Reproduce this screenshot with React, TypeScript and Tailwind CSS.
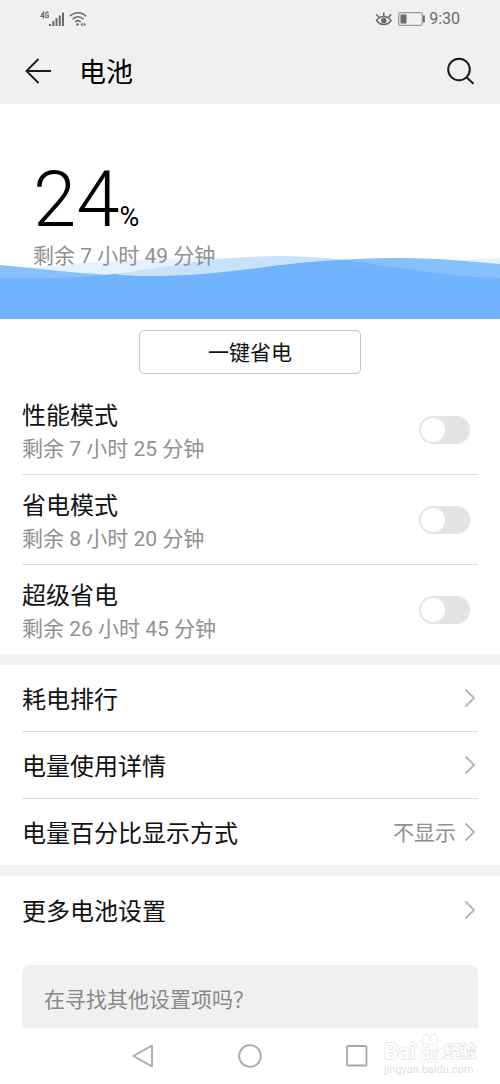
import { useState } from 'react';

interface PowerMode {
    id: string;
    title: string;
    remaining: string;
}

interface SettingLink {
    title: string;
    value?: string;
}

const modes: PowerMode[] = [
    { id: 'performance', title: '性能模式', remaining: '剩余 7 小时 25 分钟' },
    { id: 'saver', title: '省电模式', remaining: '剩余 8 小时 20 分钟' },
    { id: 'ultra', title: '超级省电', remaining: '剩余 26 小时 45 分钟' },
];

const usageLinks: SettingLink[] = [
    { title: '耗电排行' },
    { title: '电量使用详情' },
    { title: '电量百分比显示方式', value: '不显示' },
];

function StatusBar() {
    return (
        <div className="flex h-[38px] items-center justify-between px-10 text-[#6b6b6b]">
            <div className="flex items-center gap-1">
                <div className="flex items-start">
                    <svg width="9" height="16" viewBox="0 0 9 16" fill="none" stroke="currentColor" strokeWidth="1.200">
                        <path d="M3.500 7.500V1L1 5.500h3.500M8.400 2.200C8 .8 5.800 .8 5.800 2.600v2.800c0 1.800 2.600 1.800 2.600 0V4.200H7" />
                    </svg>
                    <svg width="16" height="16" viewBox="0 0 16 16" fill="currentColor">
                        <rect x="0" y="13" width="2" height="2" />
                        <rect x="3.300" y="10" width="2" height="5" />
                        <rect x="6.500" y="7" width="2" height="8" />
                        <rect x="9.800" y="4.500" width="2" height="10.500" />
                        <rect x="13" y="1.500" width="2" height="13.500" />
                    </svg>
                </div>
                <svg width="18" height="16" viewBox="0 0 18 16" fill="none" stroke="currentColor" strokeWidth="1.6">
                    <path d="M1 5.2C5.5 .6 12.500 .6 17 5.200" />
                    <path d="M3.600 8.200C6.800 5 11.200 5 14.400 8.200" />
                    <path d="M6.200 11C8 9.300 10 9.300 11.800 11" />
                    <circle cx="8.600" cy="13.500" r="1.300" fill="currentColor" stroke="none" />
                    <path d="M13.600 11.500 11.500 13.500l2.100 2zM14.800 11.500l2.100 2-2.100 2z" fill="currentColor" stroke="none" />
                </svg>
            </div>
            <div className="flex items-center gap-1">
                <svg width="18" height="16" viewBox="0 0 18 16" fill="none" stroke="currentColor" strokeWidth="1.5">
                    <path d="M1.500 9.500C5 4.300 12.500 4.300 16 9.500 12.500 14.700 5 14.700 1.500 9.500z" />
                    <circle cx="8.750" cy="9.500" r="2.700" fill="currentColor" stroke="none" />
                    <path d="M8.750 5V1.500M3.800 6.300 1.300 3.300M13.700 6.300l2.500-3" />
                </svg>
                <svg width="28" height="14" viewBox="0 0 28 14">
                    <rect x="1.700" y=".7" width="23.600" height="12.600" rx="1.500" fill="none" stroke="#9b9b9b" strokeWidth="1.300" />
                    <rect x="3.500" y="2.500" width="6" height="9" fill="currentColor" />
                    <rect x="26" y="3.500" width="1.800" height="7" fill="currentColor" />
                </svg>
                <span className="text-[16px]">9:30</span>
            </div>
        </div>
    );
}

function Waves() {
    return (
        <svg
            className="absolute inset-x-0 bottom-0 h-16 w-full"
            viewBox="0 0 500 64"
            preserveAspectRatio="none"
            aria-hidden="true"
        >
            <path d="M0 16C70 8 150 3 210 3 300 4 350 16 410 12 450 7 475 3 500 3V64H0z" fill="#e4f1fe" />
            <path d="M0 23C60 24 95 21 130 17 190 8 225 1 285 1 370 2 420 22 500 23V64H0z" fill="#c8e2fc" />
            <path d="M0 10C55 15 95 21 150 21 235 21 290 3 400 3 440 3 475 7 500 9V64H0z" fill="#86c0fd" />
            <path d="M0 23C45 24 80 23 115 19 127 21 140 21 150 21 235 21 275 7 345 5 400 12 445 22 500 23V64H0z" fill="#70b4ff" />
        </svg>
    );
}

function Chevron() {
    return (
        <svg width="12" height="20" viewBox="0 0 12 20" fill="none" stroke="#b4b4b4" strokeWidth="1.8">
            <path d="M1.500 1.500 10 10l-8.500 8.500" />
        </svg>
    );
}

function ModeRow({ mode }: { mode: PowerMode }) {
    const [enabled, setEnabled] = useState(false);

    return (
        <div className="flex h-[90px] items-center justify-between border-b border-[#dedede] pr-2 last:h-[89px] last:border-b-0">
            <label htmlFor={mode.id} className="pt-1">
                <span className="block text-[24px] leading-[34px] text-[#111]">{mode.title}</span>
                <span className="block text-[21px] leading-8 text-[#909090]">{mode.remaining}</span>
            </label>
            <input
                id={mode.id}
                type="checkbox"
                role="switch"
                checked={enabled}
                onChange={() => setEnabled(!enabled)}
                className="h-7 w-[51px] shrink-0 appearance-none rounded-full bg-[#e4e4e4] p-[2px] before:block before:size-6 before:rounded-full before:bg-white checked:bg-[#007dff] checked:before:ml-auto"
            />
        </div>
    );
}

function LinkRow({ link }: { link: SettingLink }) {
    return (
        <li className="border-b border-[#dedede] last:border-b-0">
            <a href="#" className="flex h-[66px] items-center justify-between pr-[2px] text-[24px] text-[#111]">
                <span className="pt-1">{link.title}</span>
                <span className="flex items-center gap-2 text-[21px] text-[#909090]">
                    <span className="pt-1">{link.value}</span>
                    <Chevron />
                </span>
            </a>
        </li>
    );
}

function Watermark() {
    return (
        <div className="absolute right-6 bottom-2 w-[92px] text-white" aria-hidden="true">
            <div className="flex items-end justify-between text-[22px] leading-6 font-bold [paint-order:stroke] [-webkit-text-stroke:1px_#d8d8d8]">
                <span>Bai</span>
                <span className="relative flex h-6 w-7 items-center justify-center text-[14px]">
                    <svg className="absolute bottom-0 left-0" width="28" height="32" viewBox="0 0 28 32" fill="white" stroke="#dcdcdc">
                        <ellipse cx="4" cy="13" rx="3" ry="4" />
                        <ellipse cx="10" cy="7" rx="3" ry="4.500" />
                        <ellipse cx="18" cy="7" rx="3" ry="4.500" />
                        <ellipse cx="24" cy="13" rx="3" ry="4" />
                        <path d="M14 13C9 13 8 18 5 20 0 24 2 30 7 30c3 0 4-.5 7-.5s4 .5 7 .5c5 0 7-6 2-10-3-2-4-7-9-7z" />
                    </svg>
                    <span className="relative pt-1">du</span>
                </span>
                <span className="text-[16px]">经验</span>
            </div>
            <div className="text-[11px] leading-3 text-[#dedede]">jingyan.baidu.com</div>
        </div>
    );
}

export default function App() {
    return (
        <div className="relative bg-white font-['Roboto','Noto_Sans_CJK_SC',sans-serif]">
            <header className="bg-[#f0f0f0]">
                <StatusBar />
                <div className="flex h-[66px] items-center px-6">
                    <button aria-label="返回">
                        <svg width="28" height="26" viewBox="0 0 28 26" fill="none" stroke="#1a1a1a" strokeWidth="1.900">
                            <path d="M14.500 1 2.500 13l12 12M2.500 13H27" />
                        </svg>
                    </button>
                    <h1 className="ml-[27px] pt-1 text-[27px] text-black">电池</h1>
                    <button aria-label="搜索" className="ml-auto">
                        <svg width="30" height="28" viewBox="0 0 30 28" fill="none" stroke="#1a1a1a" strokeWidth="2">
                            <circle cx="13" cy="12.500" r="10.800" />
                            <path d="M20.500 20.200 27.500 26.700" />
                        </svg>
                    </button>
                </div>
            </header>

            <main>
                <section className="relative h-[215px] px-[33px] pt-14">
                    <Waves />
                    <div className="relative">
                        <div className="flex items-baseline text-black">
                            <span className="text-[78px] leading-[80px] font-light">24</span>
                            <span className="text-[27px]">%</span>
                        </div>
                        <p className="text-[21px] leading-8 text-[#909090]">剩余 7 小时 49 分钟</p>
                    </div>
                </section>

                <div className="flex justify-center py-[11px]">
                    <button className="h-11 w-[222px] rounded-[5px] border border-[#c4c4c4] pt-1 text-[21px] text-[#111]">
                        一键省电
                    </button>
                </div>

                <section className="px-[22px]">
                    {modes.map((mode) => (
                        <ModeRow key={mode.id} mode={mode} />
                    ))}
                </section>

                <ul className="border-y-[11px] border-[#f2f2f2] px-[22px]">
                    {usageLinks.map((link) => (
                        <LinkRow key={link.title} link={link} />
                    ))}
                </ul>

                <ul className="px-[22px] pt-[1px]">
                    <LinkRow link={{ title: '更多电池设置' }} />
                </ul>

                <div className="mx-[22px] mt-[22px] flex h-[63px] items-center rounded-t-lg bg-[#f0f0f0] px-[22px] pt-2 text-[21px] text-[#888]">
                    在寻找其他设置项吗？
                </div>
            </main>

            <nav className="flex h-14 items-center justify-center gap-[83px]">
                <button aria-label="后退">
                    <svg width="24" height="24" viewBox="0 0 24 24" fill="none" stroke="#a8a8a8" strokeWidth="1.800" strokeLinejoin="round">
                        <path d="M21 1.500v21L2.500 12z" />
                    </svg>
                </button>
                <button aria-label="主屏幕">
                    <svg width="24" height="24" viewBox="0 0 24 24" fill="none" stroke="#a8a8a8" strokeWidth="1.800">
                        <circle cx="12" cy="12" r="10.800" />
                    </svg>
                </button>
                <button aria-label="最近任务">
                    <svg width="24" height="24" viewBox="0 0 24 24" fill="none" stroke="#a8a8a8" strokeWidth="1.800">
                        <rect x="2" y="2" width="19.500" height="19.500" rx="1" />
                    </svg>
                </button>
            </nav>
            <Watermark />
        </div>
    );
}
